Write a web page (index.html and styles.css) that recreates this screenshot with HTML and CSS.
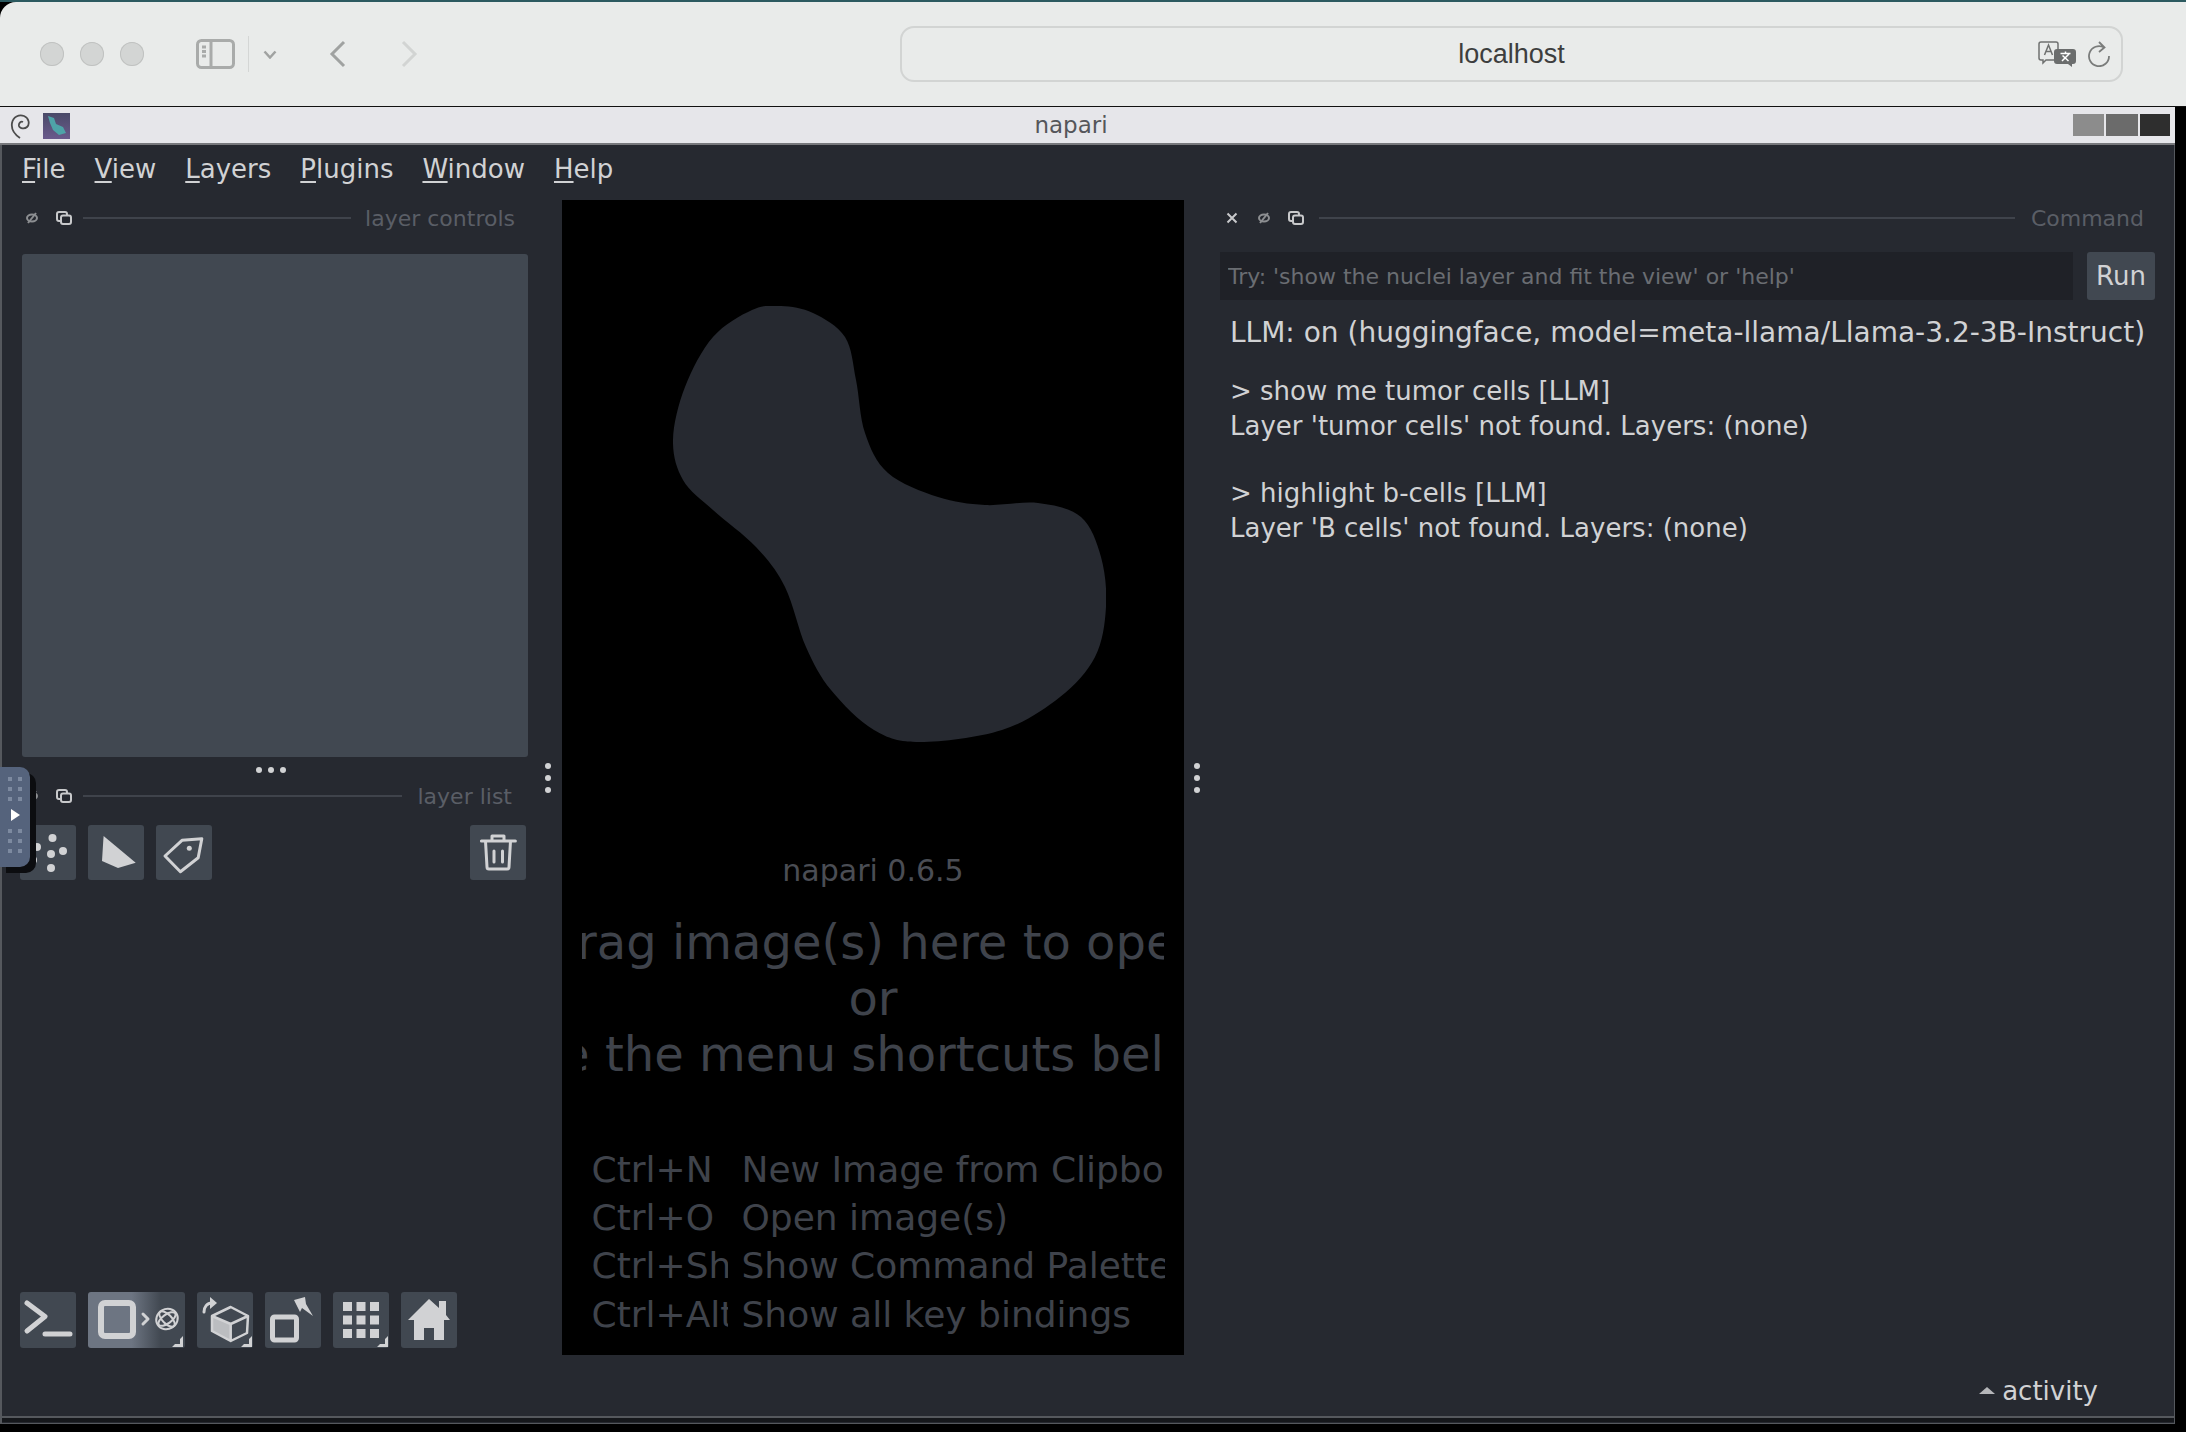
FILE: index.html
```html
<!DOCTYPE html>
<html>
  <head>
    <meta charset="UTF-8" />
    <title>napari</title>
    <link rel="stylesheet" href="styles.css">
  </head>
  <body>
    <div class="wallpaper"></div>
    <!-- browser chrome -->
    <div class="browser-bar">
      <div class="traffic"><span></span><span></span><span></span></div>
      <svg class="sidebar-icon" viewBox="0 0 39 30"><rect x="1.500" y="1.500" width="36" height="27" rx="4"/><path d="M15 2v26M6 8h4M6 12.500h4M6 17h4"/></svg>
      <span class="bar-divider"></span>
      <svg class="chevron-down" viewBox="0 0 14 9"><path d="M1.500 1.500L7 7.500l5.500-6"/></svg>
      <svg class="nav-back" viewBox="0 0 17 28"><path d="M15 2L3 14l12 12"/></svg>
      <svg class="nav-forward" viewBox="0 0 17 28"><path d="M2 2l12 12L2 26"/></svg>
      <div class="address">
        <span class="address-text">localhost</span>
        <svg class="translate-icon" viewBox="0 0 38 26"><path class="tr-back" d="M3 1h15a2 2 0 0 1 2 2v14a2 2 0 0 1-2 2H8l-3 3v-3H3a2 2 0 0 1-2-2V3a2 2 0 0 1 2-2z"/><path class="tr-a" d="M6.500 14l4-10 4 10M8 10.500h5"/><path class="tr-front" d="M19 8h16a3 3 0 0 1 3 3v9a3 3 0 0 1-3 3h-1v3l-4-3H19a3 3 0 0 1-3-3v-9a3 3 0 0 1 3-3z"/><path class="tr-x" d="M22.500 12.500h10M27.500 10.500v2M24 20l7-7M24.500 14.500l6 5.500"/></svg>
        <svg class="reload-icon" viewBox="0 0 23 26"><path d="M16 6.500A10 10 0 1 0 21 15M11 1l5.500 5.500L11 11"/></svg>
      </div>
    </div>

    <div class="window">
      <div class="titlebar">
        <svg class="swirl" viewBox="0 0 21 26"><path d="M10 25C4 21 1 16 2 10 3 4 9 1 14 3c5 2 6 8 3 11-2 2-7 2-8-1-.6-3 2-5 4-4"/></svg>
        <svg class="app-icon" viewBox="0 0 27 26"><defs><linearGradient id="appbg" x1="0" y1="0" x2="0" y2="1"><stop offset="0" stop-color="#4a4a68"/><stop offset="1" stop-color="#6a5a8c"/></linearGradient></defs><rect width="27" height="26" fill="url(#appbg)"/><path d="M5 3l6 2 2 6 7 3 3 6-7 2-6-5-3-7z" fill="#4ea3a8"/></svg>
        <span class="title-text">napari</span>
        <div class="win-buttons"><span class="win-min"></span><span class="win-max"></span><span class="win-close"></span></div>
      </div>

      <div class="app">
        <div class="menubar">
          <span><u>F</u>ile</span>
          <span><u>V</u>iew</span>
          <span><u>L</u>ayers</span>
          <span><u>P</u>lugins</span>
          <span><u>W</u>indow</span>
          <span><u>H</u>elp</span>
        </div>

        <div class="main">
          <!-- left docks -->
          <div class="left-dock">
            <div class="dock-header">
              <svg class="hide-icon" viewBox="0 0 14 12"><ellipse cx="7" cy="6" rx="5" ry="3.500"/><path d="M3 11l8-10"/></svg>
              <svg class="float-icon" viewBox="0 0 16 14"><rect x="1" y="1" width="10" height="9" rx="2"/><rect x="5" y="4.500" width="10" height="8.500" rx="2"/></svg>
              <span class="dock-line"></span>
              <span class="dock-title">layer controls</span>
            </div>
            <div class="layer-controls"></div>
            <div class="h-handle"><i></i><i></i><i></i></div>
            <div class="dock-header list-header">
              <svg class="hide-icon" viewBox="0 0 14 12"><ellipse cx="7" cy="6" rx="5" ry="3.500"/><path d="M3 11l8-10"/></svg>
              <svg class="float-icon" viewBox="0 0 16 14"><rect x="1" y="1" width="10" height="9" rx="2"/><rect x="5" y="4.500" width="10" height="8.500" rx="2"/></svg>
              <span class="dock-line"></span>
              <span class="dock-title">layer list</span>
            </div>
            <div class="layer-buttons">
              <div class="tool-btn">
                <svg viewBox="0 0 56 55"><g class="ico-fill"><circle cx="32.500" cy="13" r="4"/><circle cx="17" cy="22" r="4"/><circle cx="43" cy="26" r="4"/><circle cx="31" cy="29" r="4"/><circle cx="13" cy="35" r="4"/><circle cx="31" cy="43" r="4"/></g></svg>
              </div>
              <div class="tool-btn">
                <svg viewBox="0 0 56 55"><path class="ico-fill" d="M15.600 11L47.700 37.700 30 43 14 36z"/></svg>
              </div>
              <div class="tool-btn">
                <svg viewBox="0 0 56 55"><path class="ico-line thin" d="M45.800 13.700L42.200 32.700 24.400 46.700 9 31 26 15.300z"/><circle class="ico-fill" cx="33.300" cy="23.300" r="2.500"/></svg>
              </div>
              <div class="tool-btn trash">
                <svg viewBox="0 0 56 55"><path class="ico-line thin" d="M11.400 16h34M22 15v-4h12v4M15.500 16l1.500 26a2 2 0 0 0 2 2h18a2 2 0 0 0 2-2l1.500-26M24 26v11M32.500 26v11"/></svg>
              </div>
            </div>
            <div class="viewer-buttons">
              <div class="tool-btn tall">
                <svg viewBox="0 0 56 56"><path class="ico-line" d="M7 11l18 13.500L7 39M25 42h25"/></svg>
              </div>
              <div class="tool-btn tall ndisplay">
                <svg viewBox="0 0 97 56"><rect class="ico-line wide" x="13" y="11" width="32" height="33" rx="4"/><path class="ico-line thin" d="M55 22l5 5-5 5"/><g class="ico-line hair"><ellipse cx="79" cy="27" rx="11" ry="10" transform="rotate(-30 79 27)"/><ellipse cx="79" cy="27" rx="10" ry="4.500" transform="rotate(-35 79 27)"/><ellipse cx="79" cy="27" rx="10" ry="4.500" transform="rotate(45 79 27)"/></g><path class="ico-fill" d="M95 44v11H84l3-3h5v-5z"/></svg>
              </div>
              <div class="tool-btn tall">
                <svg viewBox="0 0 56 56"><path class="ico-fill" d="M15 24l18 8v17l-18-10z" opacity=".85"/><path class="ico-line hair thick" d="M33.700 15L51 24l-1 17-16.300 8L15 39V24zM15 24l18.700 8L51 24M33.700 32v17"/><path class="ico-line thin" d="M7 20c0-5 3-9 8-9"/><path class="ico-fill" d="M13 5l7 6-7 6z"/><path class="ico-fill" d="M55 44v11H44l3-3h5v-5z"/></svg>
              </div>
              <div class="tool-btn tall">
                <svg viewBox="0 0 56 56"><rect class="ico-line" x="7.500" y="25" width="24" height="23" rx="2"/><path class="ico-fill" d="M29 8l11-3 1 7 7 12-11-8-2 4z"/></svg>
              </div>
              <div class="tool-btn tall">
                <svg viewBox="0 0 56 56"><g class="ico-fill"><rect x="10" y="10" width="9" height="9"/><rect x="23.500" y="10" width="9" height="9"/><rect x="37" y="10" width="9" height="9"/><rect x="10" y="23.500" width="9" height="9"/><rect x="23.500" y="23.500" width="9" height="9"/><rect x="37" y="23.500" width="9" height="9"/><rect x="10" y="37" width="9" height="9"/><rect x="23.500" y="37" width="9" height="9"/><rect x="37" y="37" width="9" height="9"/></g><path class="ico-fill" d="M55 44v11H44l3-3h5v-5z"/></svg>
              </div>
              <div class="tool-btn tall">
                <svg viewBox="0 0 56 56"><path class="ico-fill" d="M28 7L38 16V9h7v14l4 5H43v20H33V36H23v12H13V28H7z"/></svg>
              </div>
            </div>
          </div>

          <div class="v-handle left"><i></i><i></i><i></i></div>

          <!-- canvas with welcome screen -->
          <div class="canvas">
            <svg class="logo" viewBox="672 306 433 436">
              <path d="M780 306C790.200 306.500 801.300 307.800 812 313S836.800 325.800 844 337S851.700 364 855 380S858.700 417.500 864 433S874.800 462.300 887 473S920.800 491.700 937 497S967.300 504 984 505S1021 501 1037 503S1069.500 508 1080 517S1095.800 542 1100 557S1106 590.300 1105 607S1101.700 642 1094 657S1074.500 684.800 1059 697S1024.300 722.500 1001 730S940.300 742 919 742S887.800 738.700 873 730S841.300 703.800 830 690S812.700 664.200 805 647S792.300 603.700 784 587S767 559.800 755 547S724.200 521.200 712 510S688.700 491.700 682 480S671.700 455.500 672 440S677.300 404.200 684 387S700.800 349.800 712 337S739.700 315.200 751 310S769.800 305.500 780 306Z"/>
            </svg>
            <div class="version">napari 0.6.5</div>
            <div class="welcome">
              <div class="big-line"><span>Drag image(s) here to open</span></div>
              <div class="big-line"><span>or</span></div>
              <div class="big-line"><span>Use the menu shortcuts below:</span></div>
            </div>
            <div class="shortcuts">
              <div class="key">Ctrl+N</div><div class="desc">New Image from Clipboard</div>
              <div class="key">Ctrl+O</div><div class="desc">Open image(s)</div>
              <div class="key">Ctrl+Shift+P</div><div class="desc">Show Command Palette</div>
              <div class="key">Ctrl+Alt+/</div><div class="desc">Show all key bindings</div>
            </div>
          </div>

          <div class="v-handle right"><i></i><i></i><i></i></div>

          <!-- command dock -->
          <div class="right-dock">
            <div class="dock-header command-header">
              <svg class="close-icon" viewBox="0 0 12 12"><path d="M1.500 1.500l9 9M10.500 1.500l-9 9"/></svg>
              <svg class="hide-icon" viewBox="0 0 14 12"><ellipse cx="7" cy="6" rx="5" ry="3.500"/><path d="M3 11l8-10"/></svg>
              <svg class="float-icon" viewBox="0 0 16 14"><rect x="1" y="1" width="10" height="9" rx="2"/><rect x="5" y="4.500" width="10" height="8.500" rx="2"/></svg>
              <span class="dock-line"></span>
              <span class="dock-title">Command</span>
            </div>
            <div class="command-row">
              <input class="command-input" type="text" placeholder="Try: 'show the nuclei layer and fit the view' or 'help'" />
              <button class="run-btn">Run</button>
            </div>
            <div class="llm-status">LLM: on (huggingface, model=meta-llama/Llama-3.2-3B-Instruct)</div>
            <div class="log">
              <div>&gt; show me tumor cells [LLM]</div>
              <div>Layer 'tumor cells' not found. Layers: (none)</div>
              <div class="log-gap">&gt; highlight b-cells [LLM]</div>
              <div>Layer 'B cells' not found. Layers: (none)</div>
            </div>
          </div>
        </div>

        <div class="statusbar"><span class="up-arrow"></span>activity</div>
        <div class="bottom-line"></div>
        <div class="bottom-strip"></div>
      </div>
    </div>

    <!-- collapsed side tab lying over the dock -->
    <div class="side-tab">
      <div class="tab-dots"><i></i><i></i><i></i><i></i><i></i><i></i></div>
      <span class="tab-play"></span>
      <div class="tab-dots"><i></i><i></i><i></i><i></i><i></i><i></i></div>
    </div>
  </body>
</html>
```

FILE: styles.css
```css
body {
    margin: 0;
    width: 2186px;
    height: 1432px;
    overflow: hidden;
    background: #000;
    font-family: "DejaVu Sans", sans-serif;
    position: relative;
}
.wallpaper { height: 2px; background: #2c5a60; }

/* browser chrome */
.browser-bar {
    height: 105px;
    box-sizing: border-box;
    background: #e9ebea;
    border-radius: 16px 0 0 0;
    display: flex;
    align-items: center;
    padding: 0 63px 0 40px;
    border-bottom: 1px solid #111;
}
.traffic { display: flex; gap: 16px; }
.traffic span {
    width: 24px;
    height: 24px;
    border-radius: 50%;
    background: #d3d5d4;
    box-shadow: inset 0 0 0 1px #c0c2c1;
}
.sidebar-icon { width: 39px; height: 30px; margin-left: 52px; fill: none; stroke: #a9abaa; stroke-width: 3; }
.bar-divider { width: 1px; height: 36px; background: #d4d6d5; margin-left: 13px; }
.chevron-down { width: 14px; height: 9px; margin-left: 14px; fill: none; stroke: #a0a2a1; stroke-width: 2.500; }
.nav-back { width: 17px; height: 28px; margin-left: 52px; fill: none; stroke: #a0a2a1; stroke-width: 3; }
.nav-forward { width: 17px; height: 28px; margin-left: 55px; fill: none; stroke: #d2d4d3; stroke-width: 3; }
.address {
    margin-left: auto;
    width: 1223px;
    height: 56px;
    box-sizing: border-box;
    border: 2px solid #d2d4d3;
    border-radius: 14px;
    display: flex;
    align-items: center;
    padding-right: 10px;
    position: relative;
}
.address-text {
    position: absolute;
    left: 0;
    right: 0;
    top: 11px;
    text-align: center;
    font-family: "Liberation Sans", sans-serif;
    font-size: 27px;
    color: #3d3e3e;
}
.translate-icon { width: 38px; height: 26px; margin-left: auto; }
.tr-back { fill: #e9ebea; stroke: #6f7170; stroke-width: 1.500; }
.tr-a { fill: none; stroke: #6f7170; stroke-width: 1.500; }
.tr-front { fill: #6b6d6d; }
.tr-x { fill: none; stroke: #fff; stroke-width: 1.500; }
.reload-icon { width: 23px; height: 26px; margin-left: 12px; fill: none; stroke: #7a7c7b; stroke-width: 1.800; }

/* window frame */
.window { width: 2175px; }
.titlebar {
    height: 38px;
    box-sizing: border-box;
    background: #e6e6ea;
    border-bottom: 2px solid #77787c;
    display: flex;
    align-items: center;
    padding: 0 5px 0 10px;
    position: relative;
}
.swirl { width: 21px; height: 26px; margin-top: 2px; fill: none; stroke: #4c4c4c; stroke-width: 1.800; }
.app-icon { width: 27px; height: 26px; margin: 2px 0 0 12px; }
.title-text {
    position: absolute;
    left: 0;
    right: 33px;
    top: 5px;
    text-align: center;
    font-size: 23px;
    color: #55565a;
}
.win-buttons { display: flex; gap: 2px; margin-left: auto; }
.win-buttons span { height: 22px; }
.win-min { width: 31px; background: #8c8c8c; }
.win-max { width: 32px; background: #6b6b6b; }
.win-close { width: 30px; background: #2e2e2e; }

.app {
    height: 1279px;
    background: #262930;
    border-left: 2px solid #55585d;
    border-right: 1px solid #55585d;
    border-bottom: 1px solid #55585d;
    color: #d1d2d4;
    box-sizing: border-box;
}
.menubar {
    height: 50px;
    box-sizing: border-box;
    padding: 0 0 2px 20px;
    display: flex;
    gap: 29px;
    align-items: center;
    font-size: 26px;
}
.menubar u { text-underline-offset: 3px; }
.main { display: flex; height: 1155px; margin-top: 5px; }

/* docks */
.left-dock {
    width: 506px;
    margin-left: 20px;
    padding-bottom: 7px;
    display: flex;
    flex-direction: column;
}
.dock-header {
    height: 36px;
    flex: none;
    display: flex;
    align-items: center;
    padding: 0 13px 0 3px;
}
.dock-line { flex: 1; height: 2px; background: #3f434b; margin: 0 14px 0 11px; }
.dock-title { font-size: 22px; color: #5a5e66; white-space: nowrap; }
.hide-icon { width: 14px; height: 12px; flex: none; fill: none; stroke: #8d8f92; stroke-width: 2; }
.float-icon { width: 16px; height: 14px; flex: none; margin-left: 17px; fill: #262930; stroke: #c8c9cb; stroke-width: 2; }
.layer-controls {
    height: 503px;
    flex: none;
    margin-top: 18px;
    background: #414851;
    border-radius: 3px;
}
.h-handle {
    height: 26px;
    flex: none;
    display: flex;
    justify-content: center;
    align-items: center;
    gap: 6px;
    padding-right: 8px;
}
.h-handle i, .v-handle i { width: 6px; height: 6px; border-radius: 50%; background: #d1d2d4; }
.list-header { height: 26px; padding-right: 16px; }
.list-header .dock-line { margin-right: 16px; }
.layer-buttons { display: flex; gap: 12px; margin: 16px 0 0 -2px; flex: none; }
.tool-btn {
    width: 56px;
    height: 55px;
    background: #414851;
    border-radius: 3px;
    flex: none;
}
.tool-btn svg { width: 100%; height: 100%; display: block; }
.trash { margin-left: auto; margin-right: 2px; }
.ico-fill { fill: #d1d2d4; }
.ico-line { fill: none; stroke: #d1d2d4; stroke-width: 5; stroke-linecap: round; stroke-linejoin: round; }
.ico-line.thin { stroke-width: 3; }
.ico-line.hair { stroke-width: 2; }
.ico-line.thick { stroke-width: 2.500; }
.ico-line.wide { stroke-width: 6; }
.viewer-buttons { display: flex; gap: 12px; margin: auto 0 0 -2px; flex: none; }
.tool-btn.tall { height: 56px; }
.tool-btn.ndisplay {
    width: 97px;
    background: linear-gradient(90deg, #6d7582 0%, #6d7582 45%, #414851 75%);
}

.v-handle {
    flex: none;
    box-sizing: border-box;
    display: flex;
    flex-direction: column;
    justify-content: center;
    gap: 6px;
}
.v-handle.left { width: 34px; padding-left: 17px; }
.v-handle.right { width: 36px; padding-left: 10px; }

/* welcome canvas */
.canvas {
    width: 622px;
    flex: none;
    background: #000;
    color: #3f434b;
    display: flex;
    flex-direction: column;
    align-items: center;
    overflow: hidden;
}
.logo { width: 433px; height: 436px; margin-top: 106px; margin-left: 32px; fill: #262930; flex: none; }
.version { font-size: 30px; color: #4a4d54; margin-top: 111px; line-height: 36px; }
.welcome { width: 582px; margin-top: 25px; }
.big-line {
    display: flex;
    justify-content: center;
    overflow: hidden;
    font-size: 48px;
    line-height: 56px;
    white-space: nowrap;
}
.big-line span { flex: none; }
.shortcuts {
    width: 573px;
    margin: 64px 0 0 10px;
    display: grid;
    grid-template-columns: 136px 1fr;
    column-gap: 14px;
    font-size: 36px;
    line-height: 48.200px;
}
.key, .desc { overflow: hidden; white-space: nowrap; }

/* command dock */
.right-dock { width: 935px; flex: none; }
.command-header { padding: 0 11px 0 6px; }
.close-icon { width: 12px; height: 12px; flex: none; fill: none; stroke: #c8c9cb; stroke-width: 2; }
.command-header .hide-icon { margin-left: 19px; }
.command-header .dock-line { margin: 0 16px 0 15px; }
.command-row { display: flex; gap: 14px; margin-top: 16px; }
.command-input {
    flex: 1;
    min-width: 0;
    height: 48px;
    box-sizing: border-box;
    background: #1f2127;
    border: none;
    outline: none;
    padding: 0 8px;
    font-family: inherit;
    font-size: 22px;
    color: #d1d2d4;
}
.command-input::placeholder { color: #6a6d72; opacity: 1; }
.run-btn {
    width: 68px;
    height: 48px;
    border: none;
    border-radius: 3px;
    background: #414851;
    color: #d1d2d4;
    padding: 0;
    font-family: inherit;
    font-size: 26px;
}
.llm-status { margin: 16px 0 0 10px; font-size: 28px; line-height: 34px; white-space: nowrap; }
.log { margin: 24px 0 0 10px; font-size: 26px; line-height: 34.500px; }
.log-gap { margin-top: 33px; }

.statusbar {
    height: 61px;
    display: flex;
    align-items: center;
    justify-content: flex-end;
    padding: 10px 76px 0 0;
    box-sizing: border-box;
    font-size: 26px;
}
.up-arrow {
    width: 0;
    height: 0;
    border: 8px solid transparent;
    border-top: 0;
    border-bottom: 7px solid #b5b6b9;
    margin-right: 7px;
}
.bottom-line { height: 2px; background: #55585d; }
.bottom-strip { height: 4px; background: #15171b; }

/* side tab */
.side-tab {
    position: absolute;
    left: 0;
    top: 767px;
    width: 30px;
    height: 100px;
    background: #55637c;
    border-radius: 0 10px 10px 0;
    box-shadow: 6px 6px 0 #0c0d10;
    display: flex;
    flex-direction: column;
    align-items: center;
    padding-top: 10px;
    box-sizing: border-box;
}
.tab-dots { display: grid; grid-template-columns: 4px 4px; gap: 6px; column-gap: 6px; }
.tab-dots i { width: 4px; height: 4px; background: #7d8aa0; }
.tab-play {
    width: 0;
    height: 0;
    border-left: 9px solid #fff;
    border-top: 6px solid transparent;
    border-bottom: 6px solid transparent;
    margin: 8px 0 8px 1px;
}
```
